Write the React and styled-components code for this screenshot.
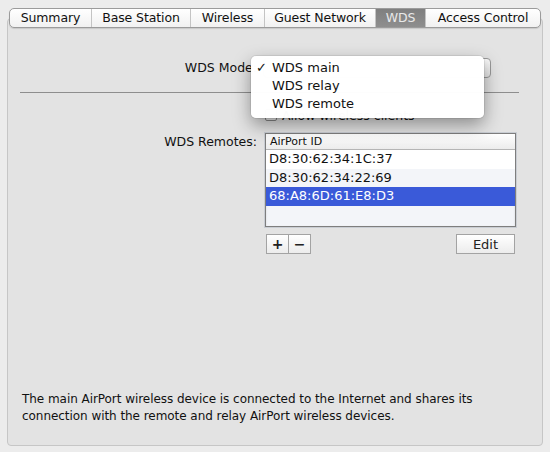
import React from "react";
import styled, { createGlobalStyle } from "styled-components";

const Global = createGlobalStyle`
  html, body { margin: 0; padding: 0; background: #ececec; }
  body { font-family: "DejaVu Sans", "Liberation Sans", sans-serif; font-size: 13px; color: #111; }
  * { box-sizing: border-box; }
`;

const Window = styled.div`
  width: 550px;
  height: 452px;
  padding: 8px 7px 6px 7px;
  display: flex;
  flex-direction: column;
`;

const TabBar = styled.div`
  align-self: center;
  display: flex;
  height: 20px;
  margin-bottom: -10px;
  position: relative;
  z-index: 2;
  border: 1px solid #9b9b9b;
  border-radius: 5px;
  overflow: hidden;
  background: linear-gradient(#ffffff, #f1f1f1);
  box-shadow: 0 1px 1px rgba(0,0,0,0.12);
`;

const Tab = styled.div`
  width: ${(p) => p.w}px;
  display: flex;
  align-items: center;
  justify-content: center;
  font-size: 12.5px;
  letter-spacing: -0.1px;
  color: ${(p) => (p.active ? "#e9e9e9" : "#111")};
  background: ${(p) => (p.active ? "linear-gradient(#7f7f7f, #8e8e8e)" : "transparent")};
  border-left: ${(p) => (p.first ? "none" : "1px solid #c4c4c4")};
  line-height: 18px;
`;

const Panel = styled.div`
  flex: 1;
  border: 1px solid #c6c6c6;
  border-radius: 4px;
  background: #e3e3e3;
  padding: 39px 0 0 0;
  display: flex;
  flex-direction: column;
`;

const FormRow = styled.div`
  display: grid;
  grid-template-columns: 249px 1fr;
  column-gap: 8px;
  align-items: ${(p) => p.align || "center"};
  margin-top: ${(p) => p.mt || 0}px;
`;

const Label = styled.div`
  text-align: right;
  font-size: 12.5px;
  line-height: 16px;
  padding-top: ${(p) => p.pt || 0}px;
  white-space: nowrap;
`;

const PopupWrap = styled.div`
  position: relative;
  height: 20px;
  width: 228px;
  margin-left: -2px;
`;

const PopupButton = styled.div`
  height: 20px;
  border: 1px solid #9a9a9a;
  border-radius: 4px;
  background: linear-gradient(#fbfbfb, #e6e6e6);
`;

const Menu = styled.div`
  position: absolute;
  left: -12px;
  top: -2px;
  width: 233px;
  padding: 3px 0 5px 0;
  background: rgba(255,255,255,0.985);
  border-radius: 5px;
  box-shadow: 0 0 0 1px rgba(0,0,0,0.07), 0 7px 18px rgba(0,0,0,0.38);
  z-index: 5;
`;

const MenuItem = styled.div`
  position: relative;
  height: 18px;
  line-height: 18px;
  padding-left: 21px;
  font-size: 13px;
  color: #111;
`;

const Check = styled.span`
  position: absolute;
  left: 5px;
  top: 0;
  font-size: 13px;
`;

const Separator = styled.div`
  height: 1px;
  background: #8e8e8e;
  margin: 14px 23px 0 12px;
`;

const CheckRow = styled.div`
  display: flex;
  align-items: center;
  gap: 5px;
  margin: 15px 0 0 257px;
  font-size: 12.5px;
  height: 14px;
`;

const CheckBox = styled.span`
  width: 12px;
  height: 12px;
  border: 1px solid #888;
  border-radius: 2px;
  background: linear-gradient(#fff, #ececec);
`;

const Table = styled.div`
  width: 251px;
  height: 94px;
  border: 1px solid #7e7e7e;
  box-shadow: 0 0 0 1px #c9cdd3, inset 0 1px 2px rgba(0,0,0,0.15);
  background: #f3f5f9;
  display: flex;
  flex-direction: column;
  overflow: hidden;
`;

const Header = styled.div`
  height: 16px;
  line-height: 15px;
  padding-left: 4px;
  font-size: 11px;
  background: linear-gradient(#ffffff, #ececec);
  border-bottom: 1px solid #b5b5b5;
  color: #111;
`;

const Row = styled.div`
  height: 18.6px;
  line-height: 18.6px;
  padding-left: 3px;
  font-size: 13px;
  background: ${(p) => (p.selected ? "#3a5ad9" : p.alt ? "#f3f5f9" : "#ffffff")};
  color: ${(p) => (p.selected ? "#ffffff" : "#111")};
`;

const ButtonRow = styled.div`
  display: flex;
  justify-content: space-between;
  width: 250px;
  margin-top: 7px;
  padding-left: 1px;
`;

const Segmented = styled.div`
  display: flex;
`;

const SmallButton = styled.div`
  width: ${(p) => p.w}px;
  height: 20px;
  border: 1px solid #a3a3a3;
  margin-left: ${(p) => (p.joined ? -1 : 0)}px;
  background: linear-gradient(#ffffff, #ececec);
  display: flex;
  align-items: center;
  justify-content: center;
  font-size: ${(p) => p.fs || 13}px;
  font-weight: ${(p) => (p.bold ? 700 : 400)};
  color: #222;
  line-height: 1;
`;

const Spacer = styled.div`
  flex: 1;
`;

const Footer = styled.div`
  padding: 0 14px 20px 14px;
  font-size: 12px;
  letter-spacing: -0.05px;
  line-height: 17px;
  color: #111;
`;

export default function App() {
  const tabs = [
    ["Summary", 81],
    ["Base Station", 99],
    ["Wireless", 74],
    ["Guest Network", 111],
    ["WDS", 50],
    ["Access Control", 115],
  ];
  return (
    <>
      <Global />
      <Window>
        <TabBar>
          {tabs.map(([t, w], i) => (
            <Tab key={t} w={w} first={i === 0} active={t === "WDS"}>
              {t}
            </Tab>
          ))}
        </TabBar>
        <Panel>
          <FormRow mt={0}>
            <Label>WDS Mode:</Label>
            <PopupWrap>
              <PopupButton />
              <Menu>
                <MenuItem>
                  <Check>✓</Check>WDS main
                </MenuItem>
                <MenuItem>WDS relay</MenuItem>
                <MenuItem>WDS remote</MenuItem>
              </Menu>
            </PopupWrap>
          </FormRow>
          <Separator />
          <CheckRow>
            <CheckBox />
            <span>Allow wireless clients</span>
          </CheckRow>
          <FormRow align="start" mt={11}>
            <Label pt={1}>WDS Remotes:</Label>
            <div>
              <Table>
                <Header>AirPort ID</Header>
                <Row>D8:30:62:34:1C:37</Row>
                <Row alt>D8:30:62:34:22:69</Row>
                <Row selected>68:A8:6D:61:E8:D3</Row>
              </Table>
              <ButtonRow>
                <Segmented>
                  <SmallButton w={23} bold fs={14}>+</SmallButton>
                  <SmallButton w={23} joined bold fs={14}>−</SmallButton>
                </Segmented>
                <SmallButton w={59}>Edit</SmallButton>
              </ButtonRow>
            </div>
          </FormRow>
          <Spacer />
          <Footer>
            The main AirPort wireless device is connected to the Internet and shares its connection with the remote and relay AirPort wireless devices.
          </Footer>
        </Panel>
      </Window>
    </>
  );
}
